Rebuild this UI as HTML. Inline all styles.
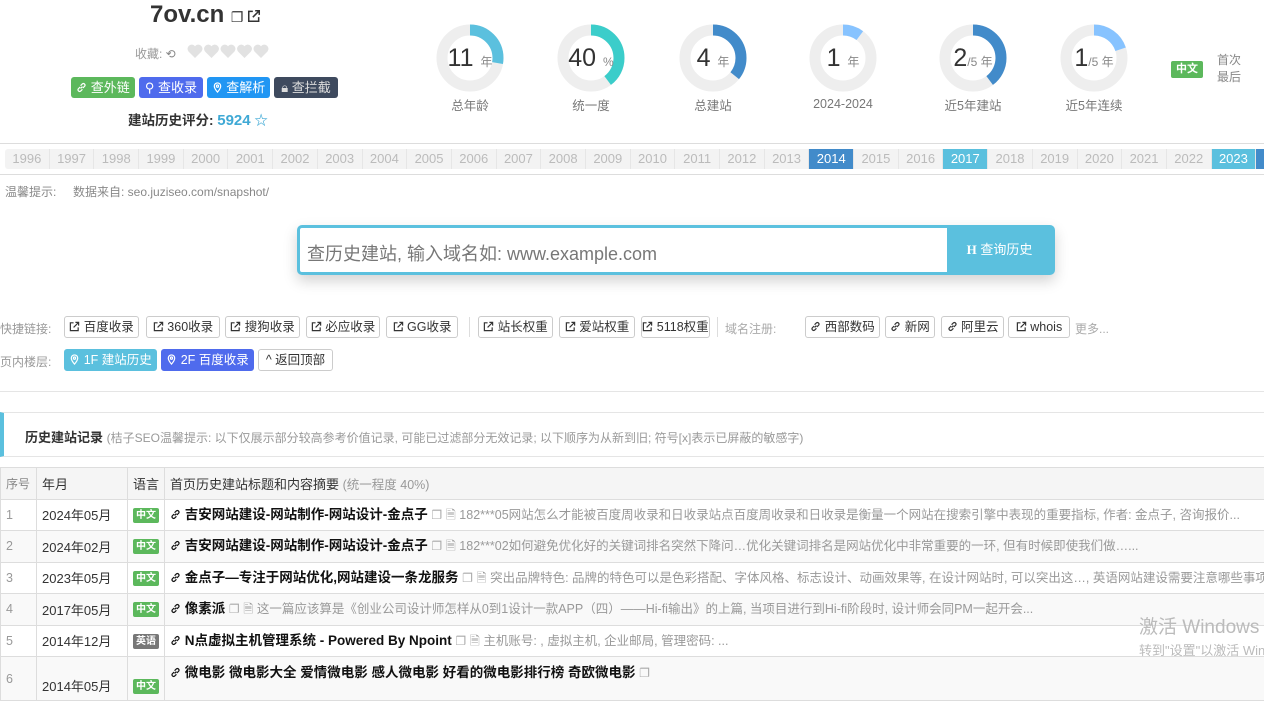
<!DOCTYPE html>
<html><head><meta charset="utf-8"><style>
*{box-sizing:border-box;margin:0;padding:0}
body{width:1264px;height:677px;overflow:hidden;background:#fff;font-family:"Liberation Sans","Noto Sans CJK SC",sans-serif;color:#333;position:relative;font-size:13px}
.abs{position:absolute}
.btn{position:absolute;top:77px;height:21px;border-radius:3px;color:#fff;font-size:13px;line-height:21px;text-align:center;white-space:nowrap}
.donut{position:absolute;top:24px;width:70px;text-align:center}
.donut .lab{position:absolute;top:71px;left:-20px;width:110px;text-align:center;color:#777;font-size:12.5px}
.donut .num{position:absolute;top:19px;left:0;width:70px;text-align:center;font-size:25px;color:#333;line-height:30px}
.donut .num small{font-size:12px;color:#888}
.years{position:absolute;top:149px;left:5px;height:20px;display:flex;border-radius:3px;overflow:hidden;background:#f3f3f3}
.years div{width:44.7px;flex:none;text-align:center;font-size:13px;line-height:20px;color:#bbb;border-right:1px solid #e6e6e6}
.years .a{background:#5bc0de;color:#fff}
.years .b{background:#428bca;color:#fff}
.tag{position:absolute;height:22px;top:316px;border:1px solid #ccc;border-radius:3px;font-size:12.5px;line-height:20px;color:#333;background:#fff;text-align:center;white-space:nowrap}
.lbl{position:absolute;font-size:12px;color:#999}
table{position:absolute;top:467px;left:0;border-collapse:collapse;width:1290px}
td{border:1px solid #ddd;height:31.5px;font-size:13px;white-space:nowrap;padding:0 5px;vertical-align:middle}
tr:nth-child(odd) td{background:#f9f9f9}
tr.h td{background:#f5f5f5}
.cn{display:inline-block;background:#5cb85c;color:#fff;font-size:10px;font-weight:bold;padding:0 3px;line-height:15px;border-radius:2px;vertical-align:middle}
.en{background:#777}
.t{font-weight:bold;color:#111;font-size:13.5px}
.d{color:#999;font-size:12.5px}
.ic{color:#aaa;font-size:12px}
svg.i{width:11px;height:11px;vertical-align:-1px;fill:none;stroke:currentColor;stroke-width:1.3}
</style></head><body>
<svg width="0" height="0" style="position:absolute"><defs>
<symbol id="ex" viewBox="0 0 12 12"><path d="M5 2H1.5v8.5H10V7M7 1.5h3.5V5M10.5 1.5L5 7"/></symbol>
<symbol id="ln" viewBox="0 0 12 12"><path d="M5 7l2-2M4.5 5.5L2.5 7.5a1.8 1.8 0 0 0 2.5 2.5l2-2M7.5 6.5l2-2A1.8 1.8 0 0 0 7 2L5 4"/></symbol>
<symbol id="pin" viewBox="0 0 12 12"><path d="M6 11S2.5 7 2.5 4.5a3.5 3.5 0 0 1 7 0C9.5 7 6 11 6 11z"/><circle cx="6" cy="4.5" r="1.2"/></symbol>
<symbol id="ht" viewBox="0 0 16 14"><path d="M8 14L1.5 7.5A4 4 0 0 1 8 2.2 4 4 0 0 1 14.5 7.5z"/></symbol>
</defs></svg>
<div class="abs" style="left:150px;top:1px;font-size:24px;font-weight:bold;color:#333">7ov.cn <span style="font-size:14px;font-weight:normal">❐ <svg class="i" style="width:14px;height:14px"><use href="#ex"/></svg></span></div>
<div class="abs" style="left:135px;top:45px;font-size:12px;color:#999;white-space:nowrap">收藏: <span style="color:#888">⟲</span></div>
<svg class="abs" style="left:187px;top:44px" width="84" height="16" fill="#e2e2e2"><use href="#ht" x="0" width="16" height="14"/><use href="#ht" x="16.5" width="16" height="14"/><use href="#ht" x="33" width="16" height="14"/><use href="#ht" x="49.5" width="16" height="14"/><use href="#ht" x="66" width="16" height="14"/></svg>
<div class="btn" style="left:71px;width:64px;background:#5cb85c"><svg class="i"><use href="#ln"/></svg> 查外链</div>
<div class="btn" style="left:139px;width:64px;background:#4f6bed">⚲ 查收录</div>
<div class="btn" style="left:207px;width:63px;background:#2196f3"><svg class="i"><use href="#pin"/></svg> 查解析</div>
<div class="btn" style="left:274px;width:64px;background:#3e4a5e;color:#ddd">🔒︎ 查拦截</div>
<div class="abs" style="left:128px;top:109px;font-size:13.5px;font-weight:bold;color:#333">建站历史评分: <span style="color:#3fa9d5;font-size:15px">5924</span> <span style="color:#3fa9d5">☆</span></div>

<svg class="abs" style="left:0;top:0" width="1264" height="140">
<g fill="none" stroke-width="11">
<circle cx="470" cy="58" r="28" stroke="#eee"/><circle cx="470" cy="58" r="28" stroke="#5bc0de" stroke-dasharray="49 200" transform="rotate(-90 470 58)"/>
<circle cx="591" cy="58" r="28" stroke="#eee"/><circle cx="591" cy="58" r="28" stroke="#3bcdca" stroke-dasharray="70 200" transform="rotate(-90 591 58)"/>
<circle cx="713" cy="58" r="28" stroke="#eee"/><circle cx="713" cy="58" r="28" stroke="#428bca" stroke-dasharray="63 200" transform="rotate(-90 713 58)"/>
<circle cx="843" cy="58" r="28" stroke="#eee"/><circle cx="843" cy="58" r="28" stroke="#87c3ff" stroke-dasharray="18 200" transform="rotate(-90 843 58)"/>
<circle cx="973" cy="58" r="28" stroke="#eee"/><circle cx="973" cy="58" r="28" stroke="#428bca" stroke-dasharray="70 200" transform="rotate(-90 973 58)"/>
<circle cx="1094" cy="58" r="28" stroke="#eee"/><circle cx="1094" cy="58" r="28" stroke="#87c3ff" stroke-dasharray="35 200" transform="rotate(-90 1094 58)"/>
</g></svg>
<div class="donut" style="left:435px"><div class="num">11 <small>年</small></div><div class="lab">总年龄</div></div>
<div class="donut" style="left:556px"><div class="num">40 <small>%</small></div><div class="lab">统一度</div></div>
<div class="donut" style="left:678px"><div class="num">4 <small>年</small></div><div class="lab">总建站</div></div>
<div class="donut" style="left:808px"><div class="num">1 <small>年</small></div><div class="lab" style="top:73px">2024-2024</div></div>
<div class="donut" style="left:938px"><div class="num">2<small>/5 年</small></div><div class="lab">近5年建站</div></div>
<div class="donut" style="left:1059px"><div class="num">1<small>/5 年</small></div><div class="lab">近5年连续</div></div>
<div class="abs cn" style="left:1171px;top:61px;font-size:11px;line-height:17px;padding:0 5px">中文</div>
<div class="abs" style="left:1217px;top:52px;font-size:12px;color:#888;line-height:17px">首次<br>最后</div>

<div class="abs" style="left:0;top:143px;width:1264px;border-top:1px solid #ddd"></div>
<div class="years">
<div>1996</div><div>1997</div><div>1998</div><div>1999</div><div>2000</div><div>2001</div><div>2002</div><div>2003</div><div>2004</div><div>2005</div><div>2006</div><div>2007</div><div>2008</div><div>2009</div><div>2010</div><div>2011</div><div>2012</div><div>2013</div><div class="b">2014</div><div>2015</div><div>2016</div><div class="a">2017</div><div>2018</div><div>2019</div><div>2020</div><div>2021</div><div>2022</div><div class="a">2023</div><div class="b">2024</div>
</div>
<div class="abs" style="left:0;top:174px;width:1264px;border-top:1px solid #ddd"></div>
<div class="abs" style="left:5px;top:183px;font-size:12px;color:#888">温馨提示: &nbsp;&nbsp;&nbsp; 数据来自: seo.juziseo.com/snapshot/</div>

<div class="abs" style="left:297px;top:225px;width:758px;height:50px;border:3px solid #5bc0de;border-radius:5px;box-shadow:0 6px 14px rgba(0,0,0,.18);background:#fff">
<div class="abs" style="left:7px;top:12px;font-size:18px;color:#777">查历史建站, 输入域名如: www.example.com</div>
<div class="abs" style="right:0;top:0;width:105px;height:44px;background:#5bc0de;color:#fff;font-size:13px;line-height:44px;text-align:center"><b style="font-family:'Liberation Serif',serif">H</b> 查询历史</div>
</div>

<div class="lbl" style="left:0;top:320px">快捷链接:</div>
<div class="tag" style="left:64px;width:75px"><svg class="i"><use href="#ex"/></svg> 百度收录</div>
<div class="tag" style="left:146px;width:74px"><svg class="i"><use href="#ex"/></svg> 360收录</div>
<div class="tag" style="left:225px;width:75px"><svg class="i"><use href="#ex"/></svg> 搜狗收录</div>
<div class="tag" style="left:306px;width:74px"><svg class="i"><use href="#ex"/></svg> 必应收录</div>
<div class="tag" style="left:386px;width:72px"><svg class="i"><use href="#ex"/></svg> GG收录</div>
<div class="abs" style="left:469px;top:317px;height:20px;border-left:1px solid #ddd"></div>
<div class="tag" style="left:478px;width:75px"><svg class="i"><use href="#ex"/></svg> 站长权重</div>
<div class="tag" style="left:559px;width:76px"><svg class="i"><use href="#ex"/></svg> 爱站权重</div>
<div class="tag" style="left:641px;width:69px"><svg class="i"><use href="#ex"/></svg> 5118权重</div>
<div class="abs" style="left:717px;top:317px;height:20px;border-left:1px solid #ddd"></div>
<div class="lbl" style="left:725px;top:320px;color:#aaa">域名注册:</div>
<div class="tag" style="left:805px;width:75px"><svg class="i"><use href="#ln"/></svg> 西部数码</div>
<div class="tag" style="left:885px;width:50px"><svg class="i"><use href="#ln"/></svg> 新网</div>
<div class="tag" style="left:941px;width:63px"><svg class="i"><use href="#ln"/></svg> 阿里云</div>
<div class="tag" style="left:1008px;width:62px"><svg class="i"><use href="#ex"/></svg> whois</div>
<div class="lbl" style="left:1075px;top:320px;color:#aaa">更多...</div>

<div class="lbl" style="left:0;top:353px">页内楼层:</div>
<div class="tag" style="left:64px;width:93px;top:349px;background:#5bc0de;border-color:#5bc0de;color:#fff"><svg class="i"><use href="#pin"/></svg> 1F 建站历史</div>
<div class="tag" style="left:161px;width:93px;top:349px;background:#4f6bed;border-color:#4f6bed;color:#fff"><svg class="i"><use href="#pin"/></svg> 2F 百度收录</div>
<div class="tag" style="left:258px;width:75px;top:349px">^ 返回顶部</div>
<div class="abs" style="left:0;top:391px;width:1264px;border-top:1px solid #e5e5e5"></div>

<div class="abs" style="left:0;top:412px;width:1264px;height:45px;border-top:1px solid #e5e5e5;border-bottom:1px solid #e5e5e5;border-left:4px solid #5bc0de"></div>
<div class="abs" style="left:25px;top:427px;font-size:13px;white-space:nowrap"><b>历史建站记录</b> <span style="color:#999;font-size:12px">(桔子SEO温馨提示: 以下仅展示部分较高参考价值记录, 可能已过滤部分无效记录; 以下顺序为从新到旧; 符号[x]表示已屏蔽的敏感字)</span></div>

<table>
<tr class="h"><td style="width:36px;color:#888;font-size:12px">序号</td><td style="width:91px">年月</td><td style="width:36px">语言</td><td>首页历史建站标题和内容摘要 <span class="d">(统一程度 40%)</span></td></tr>
<tr><td class="d">1</td><td>2024年05月</td><td><span class="cn">中文</span></td><td><span class="t"><svg class="i"><use href="#ln"/></svg> 吉安网站建设-网站制作-网站设计-金点子</span> <span class="ic">❐</span> <span class="d">🗎 182***05网站怎么才能被百度周收录和日收录站点百度周收录和日收录是衡量一个网站在搜索引擎中表现的重要指标, 作者: 金点子, 咨询报价...</span></td></tr>
<tr><td class="d">2</td><td>2024年02月</td><td><span class="cn">中文</span></td><td><span class="t"><svg class="i"><use href="#ln"/></svg> 吉安网站建设-网站制作-网站设计-金点子</span> <span class="ic">❐</span> <span class="d">🗎 182***02如何避免优化好的关键词排名突然下降问…优化关键词排名是网站优化中非常重要的一环, 但有时候即使我们做…...</span></td></tr>
<tr><td class="d">3</td><td>2023年05月</td><td><span class="cn">中文</span></td><td><span class="t"><svg class="i"><use href="#ln"/></svg> 金点子—专注于网站优化,网站建设一条龙服务</span> <span class="ic">❐</span> <span class="d">🗎 突出品牌特色: 品牌的特色可以是色彩搭配、字体风格、标志设计、动画效果等, 在设计网站时, 可以突出这…, 英语网站建设需要注意哪些事项</span></td></tr>
<tr><td class="d">4</td><td>2017年05月</td><td><span class="cn">中文</span></td><td><span class="t"><svg class="i"><use href="#ln"/></svg> 像素派</span> <span class="ic">❐</span> <span class="d">🗎 这一篇应该算是《创业公司设计师怎样从0到1设计一款APP（四）——Hi-fi输出》的上篇, 当项目进行到Hi-fi阶段时, 设计师会同PM一起开会...</span></td></tr>
<tr><td class="d">5</td><td>2014年12月</td><td><span class="cn en">英语</span></td><td><span class="t"><svg class="i"><use href="#ln"/></svg> N点虚拟主机管理系统 - Powered By Npoint</span> <span class="ic">❐</span> <span class="d">🗎 主机账号: , 虚拟主机, 企业邮局, 管理密码: ...</span></td></tr>
<tr><td class="d" style="height:44px">6</td><td style="padding-top:14px">2014年05月</td><td style="padding-top:14px"><span class="cn">中文</span></td><td style="vertical-align:top;padding-top:4px"><span class="t"><svg class="i"><use href="#ln"/></svg> 微电影 微电影大全 爱情微电影 感人微电影 好看的微电影排行榜 奇欧微电影</span> <span class="ic">❐</span></td></tr>
</table>
<div class="abs" style="left:1139px;top:612px;font-size:19px;color:#bbb;white-space:nowrap">激活 Windows</div>
<div class="abs" style="left:1139px;top:640px;font-size:13px;color:#bbb;white-space:nowrap">转到"设置"以激活 Windows</div>
</body></html>
